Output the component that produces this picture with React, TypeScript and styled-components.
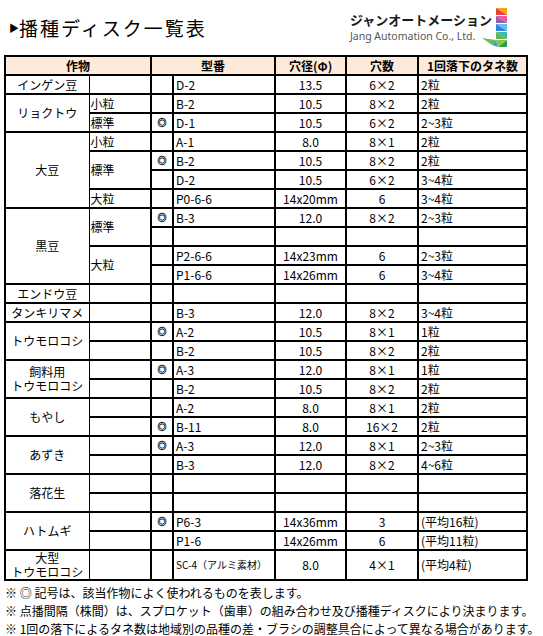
import React from "react";

import styled, { createGlobalStyle } from "styled-components";

type Span = [string, number];

interface IDiskRow {
  crop?: Span;
  sub?: Span;
  mark?: boolean;
  model?: string;
  dia?: string;
  holes?: string;
  seeds?: string;
  tall?: boolean;
  small?: boolean;
}

const rows: IDiskRow[] = [
  { crop: ["インゲン豆", 1], sub: ["", 1], model: "D-2", dia: "13.5", holes: "6×2", seeds: "2粒" },
  { crop: ["リョクトウ", 2], sub: ["小粒", 1], model: "B-2", dia: "10.5", holes: "8×2", seeds: "2粒" },
  { sub: ["標準", 1], mark: true, model: "D-1", dia: "10.5", holes: "6×2", seeds: "2~3粒" },
  { crop: ["大豆", 4], sub: ["小粒", 1], model: "A-1", dia: "8.0", holes: "8×1", seeds: "2粒" },
  { sub: ["標準", 2], mark: true, model: "B-2", dia: "10.5", holes: "8×2", seeds: "2粒" },
  { model: "D-2", dia: "10.5", holes: "6×2", seeds: "3~4粒" },
  { sub: ["大粒", 1], model: "P0-6-6", dia: "14x20mm", holes: "6", seeds: "3~4粒" },
  { crop: ["黒豆", 4], sub: ["標準", 2], mark: true, model: "B-3", dia: "12.0", holes: "8×2", seeds: "2~3粒" },
  {},
  { sub: ["大粒", 2], model: "P2-6-6", dia: "14x23mm", holes: "6", seeds: "2~3粒" },
  { model: "P1-6-6", dia: "14x26mm", holes: "6", seeds: "3~4粒" },
  { crop: ["エンドウ豆", 1], sub: ["", 1] },
  { crop: ["タンキリマメ", 1], sub: ["", 1], model: "B-3", dia: "12.0", holes: "8×2", seeds: "3~4粒" },
  { crop: ["トウモロコシ", 2], sub: ["", 1], mark: true, model: "A-2", dia: "10.5", holes: "8×1", seeds: "1粒" },
  { sub: ["", 1], model: "B-2", dia: "10.5", holes: "8×2", seeds: "2粒" },
  { crop: ["飼料用\nトウモロコシ", 2], sub: ["", 1], mark: true, model: "A-3", dia: "12.0", holes: "8×1", seeds: "1粒" },
  { sub: ["", 1], model: "B-2", dia: "10.5", holes: "8×2", seeds: "2粒" },
  { crop: ["もやし", 2], sub: ["", 1], model: "A-2", dia: "8.0", holes: "8×1", seeds: "2粒" },
  { sub: ["", 1], mark: true, model: "B-11", dia: "8.0", holes: "16×2", seeds: "2粒" },
  { crop: ["あずき", 2], sub: ["", 1], mark: true, model: "A-3", dia: "12.0", holes: "8×1", seeds: "2~3粒" },
  { sub: ["", 1], model: "B-3", dia: "12.0", holes: "8×2", seeds: "4~6粒" },
  { crop: ["落花生", 2], sub: ["", 1] },
  { sub: ["", 1] },
  { crop: ["ハトムギ", 2], sub: ["", 1], mark: true, model: "P6-3", dia: "14x36mm", holes: "3", seeds: "(平均16粒)" },
  { sub: ["", 1], model: "P1-6", dia: "14x26mm", holes: "6", seeds: "(平均11粒)" },
  {
    crop: ["大型\nトウモロコシ", 1],
    sub: ["", 1],
    model: "SC-4（アルミ素材）",
    dia: "8.0",
    holes: "4×1",
    seeds: "(平均4粒)",
    tall: true,
    small: true,
  },
];

function JangLogo(): JSX.Element {
  return (
    <LogoMark width="28" height="41" viewBox="0 0 28 41">
      <polygon points="16,1 27,1 27,8" fill="#f6a21c" />
      <polygon points="16,1 27,8 16,8" fill="#e8413a" />
      <polygon points="16,9 27,9 27,16" fill="#e75a9c" />
      <polygon points="16,9 27,16 16,16" fill="#9a5bb0" />
      <polygon points="16,17 27,17 27,24" fill="#5ec3ea" />
      <polygon points="16,17 27,24 16,24" fill="#2f86d6" />
      <polygon points="16,25 27,25 27,32" fill="#3db9a4" />
      <polygon points="16,25 27,32 16,32" fill="#5db75a" />
      <polygon points="27,33 27,40 18,40" fill="#2f9a4c" />
      <polygon points="16,33 27,33 18,40" fill="#8cc63f" />
      <polygon points="2,31 16,33 12,38" fill="#6fbe44" />
      <polygon points="12,38 16,33 18,40" fill="#3d9fd6" />
    </LogoMark>
  );
}

export default function App(): JSX.Element {
  return (
    <Page>
      <GlobalStyle />
      <TopBar>
        <Title>
          <TitleArrow>▶</TitleArrow>播種ディスク一覧表
        </Title>
        <Logo>
          <LogoText>
            <LogoJp>ジャンオートメーション</LogoJp>
            <LogoEn>Jang Automation Co., Ltd.</LogoEn>
          </LogoText>
          <JangLogo />
        </Logo>
      </TopBar>

      <DiskTable>
        <colgroup>
          <col style={{ width: 84 }} />
          <col style={{ width: 62 }} />
          <col style={{ width: 22 }} />
          <col style={{ width: 102 }} />
          <col style={{ width: 71 }} />
          <col style={{ width: 72 }} />
          <col style={{ width: 109 }} />
        </colgroup>
        <thead>
          <tr>
            <HeadCell colSpan={2}>作物</HeadCell>
            <HeadCell colSpan={2}>型番</HeadCell>
            <HeadCell>穴径(Φ)</HeadCell>
            <HeadCell>穴数</HeadCell>
            <HeadCell>1回落下のタネ数</HeadCell>
          </tr>
        </thead>
        <tbody>
          {rows.map((row, i) => (
            <BodyRow key={i} tall={row.tall}>
              {row.crop && <CropCell rowSpan={row.crop[1]}>{row.crop[0]}</CropCell>}
              {row.sub && <SubCell rowSpan={row.sub[1]}>{row.sub[0]}</SubCell>}
              <MarkCell>{row.mark ? "◎" : ""}</MarkCell>
              <ModelCell small={row.small}>{row.model}</ModelCell>
              <CenterCell>{row.dia}</CenterCell>
              <CenterCell>{row.holes}</CenterCell>
              <SeedCell>{row.seeds}</SeedCell>
            </BodyRow>
          ))}
        </tbody>
      </DiskTable>

      <Notes>
        <p>※ ◎ 記号は、該当作物によく使われるものを表します。</p>
        <p>※ 点播間隔（株間）は、スプロケット（歯車）の組み合わせ及び播種ディスクにより決まります。</p>
        <p>※ 1回の落下によるタネ数は地域別の品種の差・ブラシの調整具合によって異なる場合があります。</p>
      </Notes>
    </Page>
  );
}

const GlobalStyle = createGlobalStyle`
  body {
    margin: 0;
    background: #fff;
    color: #000;
    font-family: "Noto Sans CJK JP", "Noto Sans", sans-serif;
  }
`;

const Page = styled.div`
  width: 543px;
  padding: 0 0 0 4px;
  box-sizing: border-box;
`;

const TopBar = styled.div`
  display: flex;
  justify-content: space-between;
  align-items: center;

  height: 55px;
  padding: 0 35px 0 5px;
  box-sizing: border-box;
`;

const Title = styled.h1`
  display: flex;
  align-items: center;

  margin: 0;

  font-size: 19px;
  font-weight: 400;
  letter-spacing: 2px;
`;

const TitleArrow = styled.span`
  margin-right: 0;
  font-size: 10px;
  letter-spacing: 0;
`;

const Logo = styled.div`
  display: flex;
  align-items: center;
`;

const LogoText = styled.div`
  display: flex;
  flex-direction: column;
`;

const LogoJp = styled.span`
  font-size: 13px;
  font-weight: 700;
  line-height: 17px;
  letter-spacing: 0;
  color: #1a1a1a;
`;

const LogoEn = styled.span`
  font-family: "Noto Sans", sans-serif;
  font-size: 10.5px;
  line-height: 16px;
  color: #555;
`;

const LogoMark = styled.svg`
  margin-left: -12px;
`;

const DiskTable = styled.table`
  width: 524px;
  table-layout: fixed;
  border-collapse: collapse;

  font-size: 12px;

  td,
  th {
    padding: 0;
    border: 2px solid #000;
    line-height: 14px;
    overflow: hidden;
    white-space: nowrap;
  }
`;

const HeadCell = styled.th`
  height: 17px;
  background: #fdeada;
  font-weight: 700;
  text-align: center;
`;

const BodyRow = styled.tr<{ tall?: boolean }>`
  height: ${(props) => (props.tall ? "29px" : "19px")};
`;

const CropCell = styled.td`
  text-align: center;
  white-space: pre-line !important;
  border-right-width: 1px !important;
`;

const SubCell = styled.td`
  padding-left: 1px !important;
  border-left-width: 1px !important;
`;

const MarkCell = styled.td`
  font-size: 9px;
  text-align: center;
  -webkit-text-stroke: 0.3px #000;
`;

const ModelCell = styled.td<{ small?: boolean }>`
  padding-left: 2px !important;
  font-size: ${(props) => (props.small ? "10px" : "12px")};
`;

const CenterCell = styled.td`
  text-align: center;
`;

const SeedCell = styled.td`
  padding-left: 2px !important;
`;

const Notes = styled.div`
  margin-top: 3px;
  padding-left: 1px;

  font-size: 12px;
  line-height: 18px;
  white-space: nowrap;

  p {
    margin: 0;
  }
`;
